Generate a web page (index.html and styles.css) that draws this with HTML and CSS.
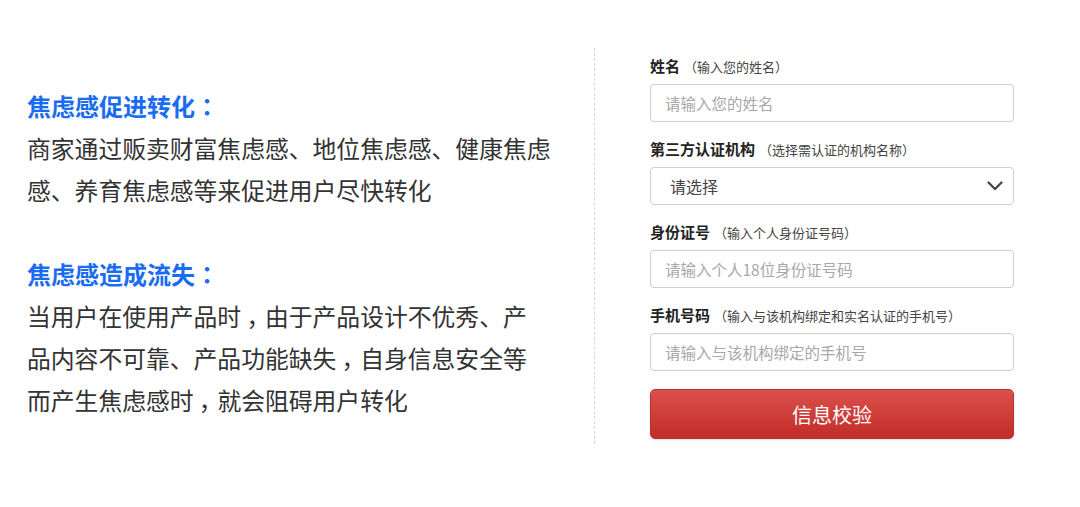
FILE: index.html
```html
<!DOCTYPE html>
<html lang="zh-CN">
<head>
<meta charset="utf-8">
<title>焦虑感</title>
<link rel="stylesheet" href="styles.css">
</head>
<body>
<div class="page">
  <div class="left">
    <div class="block">
      <div class="title">焦虑感促进转化<span class="p" lang="zh-TW">：</span></div>
      <div class="line">商家通过贩卖财富焦虑感、地位焦虑感、健康焦虑</div>
      <div class="line">感、养育焦虑感等来促进用户尽快转化</div>
    </div>
    <div class="block">
      <div class="title">焦虑感造成流失<span class="p" lang="zh-TW">：</span></div>
      <div class="line">当用户在使用产品时<span class="c">，</span>由于产品设计不优秀、产</div>
      <div class="line">品内容不可靠、产品功能缺失<span class="c">，</span>自身信息安全等</div>
      <div class="line">而产生焦虑感时<span class="c">，</span>就会阻碍用户转化</div>
    </div>
  </div>
  <div class="right">
    <form class="form">
      <div class="field">
        <div class="label">姓名<span class="hint">（输入您的姓名）</span></div>
        <div class="input"><span class="ph">请输入您的姓名</span></div>
      </div>
      <div class="field">
        <div class="label">第三方认证机构<span class="hint">（选择需认证的机构名称）</span></div>
        <div class="input select"><span class="val">请选择</span>
          <svg class="chev" width="16" height="10" viewBox="0 0 16 10"><path d="M1.5 1.5 L8 8 L14.5 1.5" fill="none" stroke="#444" stroke-width="2.2" stroke-linecap="round" stroke-linejoin="round"/></svg>
        </div>
      </div>
      <div class="field">
        <div class="label">身份证号<span class="hint">（输入个人身份证号码）</span></div>
        <div class="input"><span class="ph">请输入个人18位身份证号码</span></div>
      </div>
      <div class="field">
        <div class="label">手机号码<span class="hint">（输入与该机构绑定和实名认证的手机号）</span></div>
        <div class="input"><span class="ph">请输入与该机构绑定的手机号</span></div>
      </div>
      <div class="btn">信息校验</div>
    </form>
  </div>
</div>
</body>
</html>
```

FILE: styles.css
```css
html, body {
  margin: 0;
  padding: 0;
  background: #ffffff;
}
body {
  font-family: "Noto Sans CJK SC", "Noto Sans", sans-serif;
  color: #333333;
}
.page {
  display: flex;
  margin-top: 48px;
  height: 396px;
}
.left {
  width: 595px;
  flex: none;
  padding-left: 27px;
  padding-top: 37px;
  box-sizing: border-box;
  border-right: 1px dashed #d6d6d6;
}
.block {
  margin-bottom: 42px;
}
.title {
  font-size: 24px;
  line-height: 42px;
  font-weight: 700;
  color: #1a6cf2;
}
.line {
  font-size: 23.8px;
  line-height: 42px;
  color: #333333;
  white-space: nowrap;
}
.p {
  font-family: "Noto Sans CJK TC", "Noto Sans CJK SC", sans-serif;
}
.c {
  padding-left: 0.22em;
  letter-spacing: -0.22em;
}
.right {
  padding-left: 55px;
  padding-top: 8px;
}
.form {
  width: 364px;
  display: flex;
  flex-direction: column;
}
.field {
  margin-bottom: 17px;
}
.label {
  height: 20px;
  font-size: 15px;
  line-height: 20px;
  font-weight: 700;
  color: #222222;
  margin-bottom: 8px;
  white-space: nowrap;
}
.hint {
  font-size: 13px;
  line-height: 13px;
  font-weight: 400;
  color: #444444;
  margin-left: 4px;
}
.input {
  height: 38px;
  box-sizing: border-box;
  border: 1px solid #cfcfcf;
  border-radius: 4px;
  background: #fff;
  display: flex;
  align-items: center;
  padding-left: 14px;
}
.ph {
  font-size: 15.5px;
  color: #a8a8a8;
}
.select {
  padding-left: 19px;
  padding-right: 10px;
  justify-content: space-between;
}
.val {
  font-size: 16px;
  color: #444444;
}
.chev {
  display: block;
}
.btn {
  margin-top: 1px;
  height: 50px;
  box-sizing: border-box;
  border: 1px solid #b8322e;
  border-radius: 5px;
  background: linear-gradient(#db504c, #c12d29);
  color: #ffffff;
  font-size: 20px;
  display: flex;
  align-items: center;
  justify-content: center;
  box-shadow: 0 1px 2px rgba(0,0,0,0.15);
}
```
